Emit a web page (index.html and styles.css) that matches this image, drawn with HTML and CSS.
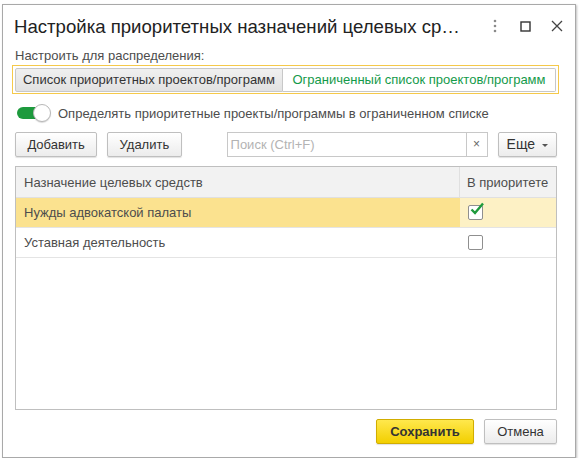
FILE: index.html
```html
<!DOCTYPE html>
<html lang="ru">
<head>
<meta charset="utf-8">
<link rel="stylesheet" href="styles.css">
</head>
<body>
<div class="window">
  <div class="titlebar">
    <div class="title">Настройка приоритетных назначений целевых ср…</div>
    <div class="win-icons">
      <svg class="ico" width="6" height="14" viewBox="0 0 6 14"><circle cx="3" cy="2" r="1.3" fill="#8a8a8a"/><circle cx="3" cy="7" r="1.3" fill="#8a8a8a"/><circle cx="3" cy="12" r="1.3" fill="#8a8a8a"/></svg>
      <svg class="ico" width="11" height="11" viewBox="0 0 11 11"><rect x="1" y="1" width="9" height="9" fill="none" stroke="#333" stroke-width="1.4"/></svg>
      <svg class="ico" width="12" height="12" viewBox="0 0 12 12"><path d="M1 1L11 11M11 1L1 11" stroke="#444" stroke-width="1.3"/></svg>
    </div>
  </div>
  <div class="content">
    <div class="label">Настроить для распределения:</div>
    <div class="switcher">
      <div class="seg seg-active">Список приоритетных проектов/программ</div>
      <div class="seg seg-link">Ограниченный список проектов/программ</div>
    </div>
    <div class="toggle-row">
      <div class="toggle"><div class="knob"></div></div>
      <span>Определять приоритетные проекты/программы в ограниченном списке</span>
    </div>
    <div class="toolbar">
      <div class="btn btn-add">Добавить</div>
      <div class="btn btn-del">Удалить</div>
      <div class="search">
        <div class="search-input">Поиск (Ctrl+F)</div>
        <div class="search-clear">×</div>
      </div>
      <div class="btn btn-more">Еще <span class="caret"></span></div>
    </div>
    <div class="table">
      <div class="row head">
        <div class="cell c1">Назначение целевых средств</div>
        <div class="cell c2">В приоритете</div>
      </div>
      <div class="row sel">
        <div class="cell c1">Нужды адвокатской палаты</div>
        <div class="cell c2"><span class="cb"><svg width="16" height="14" viewBox="0 0 16 14"><path d="M2.5 7.5L6 11L14 1.5" fill="none" stroke="#1e9a3c" stroke-width="2.4"/></svg></span></div>
      </div>
      <div class="row">
        <div class="cell c1">Уставная деятельность</div>
        <div class="cell c2"><span class="cb"></span></div>
      </div>
    </div>
    <div class="footer">
      <div class="btn btn-save">Сохранить</div>
      <div class="btn btn-cancel">Отмена</div>
    </div>
  </div>
</div>
</body>
</html>
```
FILE: styles.css
```css
html, body {
  margin: 0;
  padding: 0;
  background: #fff;
  font-family: "Liberation Sans", Arial, sans-serif;
  font-size: 13px;
  color: #4d4d4d;
}
.window {
  margin: 4px 0 0 2px;
  width: 574px;
  height: 454px;
  box-sizing: border-box;
  border: 1px solid #a9a9a9;
  box-shadow: 1px 1px 2px rgba(0,0,0,0.25);
  background: #fff;
  display: flex;
  flex-direction: column;
}
.titlebar {
  height: 42px;
  display: flex;
  align-items: center;
  padding: 0 0 0 11px;
}
.title {
  flex: 1;
  font-size: 18.6px;
  color: #222;
  white-space: nowrap;
  padding-top: 2px;
}
.win-icons {
  display: flex;
  align-items: center;
  padding-right: 12px;
}
.ico { display: block; }
.win-icons .ico:nth-child(1) { margin-right: 22px; }
.win-icons .ico:nth-child(2) { margin-right: 20px; }
.content {
  flex: 1;
  display: flex;
  flex-direction: column;
  padding: 0 18px 0 9px;
}
.label {
  height: 18px;
  line-height: 18px;
  padding-left: 3px;
}
.switcher {
  display: flex;
  border: 1px solid #f5c94a;
  padding: 2px 2px 1px 2px;
  height: 24px;
  margin-right: -2px;
}
.seg {
  box-sizing: border-box;
  height: 24px;
  line-height: 22px;
  text-align: center;
  border: 1px solid #c8c8c8;
}
.seg-active {
  width: 268px;
  background: linear-gradient(#f0f0f0, #e2e2e2);
  color: #333;
  border-radius: 2px 0 0 2px;
}
.seg-link {
  flex: 1;
  background: #fff;
  color: #149a4a;
  border-left: none;
  border-radius: 0 2px 2px 0;
}
.toggle-row {
  display: flex;
  align-items: center;
  height: 20px;
  margin-top: 9px;
  padding-left: 5px;
}
.toggle {
  position: relative;
  width: 34px;
  height: 18px;
  margin-right: 7px;
}
.toggle::before {
  content: "";
  position: absolute;
  left: 0;
  top: 3px;
  width: 30px;
  height: 12px;
  border-radius: 6px;
  background: #1d9a3d;
}
.knob {
  position: absolute;
  right: 0;
  top: 0;
  width: 16px;
  height: 16px;
  border-radius: 50%;
  background: #fff;
  border: 1px solid #b8b8b8;
  box-shadow: 0 1px 1px rgba(0,0,0,0.15);
}
.toolbar {
  display: flex;
  align-items: center;
  margin-top: 9px;
  height: 25px;
  padding-left: 3px;
}
.btn {
  box-sizing: border-box;
  height: 25px;
  line-height: 23px;
  border: 1px solid #bfbfbf;
  border-radius: 2px;
  background: linear-gradient(#ffffff, #ececec);
  color: #333;
  text-align: center;
  box-shadow: 0 1px 1px rgba(0,0,0,0.12);
  font-size: 13px;
}
.btn-add { width: 83px; }
.btn-del { width: 75px; margin-left: 10px; }
.search {
  display: flex;
  margin-left: 45px;
  height: 25px;
  box-sizing: border-box;
  border: 1px solid #c8c8c8;
}
.search-input {
  width: 238px;
  line-height: 23px;
  padding-left: 3px;
  color: #b3b3b3;
  box-sizing: border-box;
}
.search-clear {
  width: 20px;
  border-left: 1px solid #c8c8c8;
  text-align: center;
  line-height: 22px;
  color: #666;
  font-size: 12px;
}
.btn-more {
  width: 60px;
  margin-left: 10px;
  font-size: 14px;
}
.caret {
  display: inline-block;
  width: 0;
  height: 0;
  border-left: 3px solid transparent;
  border-right: 3px solid transparent;
  border-top: 3px solid #555;
  vertical-align: middle;
  margin-left: 3px;
}
.table {
  margin-top: 9px;
  margin-left: 3px;
  height: 244px;
  border: 1px solid #bfbfbf;
  box-sizing: border-box;
}
.row {
  display: flex;
  height: 30px;
  border-bottom: 1px solid #e4e4e4;
  box-sizing: border-box;
}
.row.head {
  height: 31px;
  background: #f2f2f2;
  border-bottom: 1px solid #e0e0e0;
}
.cell {
  display: flex;
  align-items: center;
  box-sizing: border-box;
}
.c1 {
  width: 444px;
  padding-left: 8px;
  border-right: 1px solid #e0e0e0;
}
.c2 {
  flex: 1;
  padding-left: 7px;
}
.row.sel .c1 { background: #fbe28f; }
.row.sel .c2 { background: #fdf1c5; }
.row:not(.head) .c1 { border-right: none; }
.row:not(.head) .c2 { padding-left: 8px; }
.cb {
  position: relative;
  width: 15px;
  height: 15px;
  box-sizing: border-box;
  border: 1px solid #8f8f8f;
  border-radius: 2px;
  background: #fff;
}
.cb svg {
  position: absolute;
  left: 0;
  top: -4px;
}
.footer {
  display: flex;
  justify-content: flex-end;
  margin-top: 9px;
  gap: 10px;
}
.btn-save {
  width: 98px;
  background: linear-gradient(#ffe84d, #f2cf00);
  border-color: #d1ad00;
  color: #333;
  font-weight: bold;
  font-size: 13px;
}
.btn-cancel {
  width: 73px;
}
```
